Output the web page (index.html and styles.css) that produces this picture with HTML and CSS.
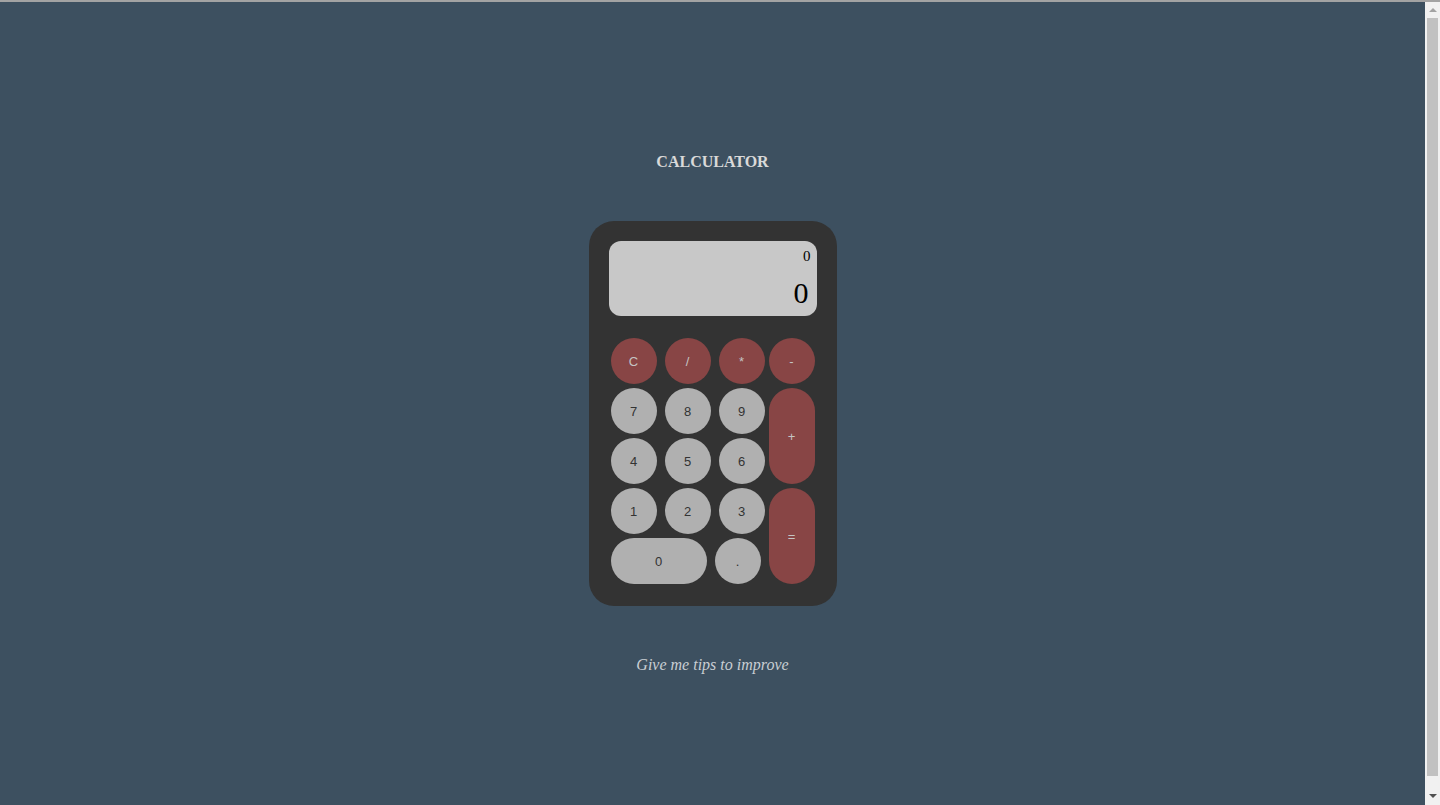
FILE: index.html
```html
<!DOCTYPE html>
<html lang="en">
<head>
<meta charset="utf-8">
<title>Calculator</title>
<link rel="stylesheet" href="styles.css">
</head>
<body>
<div class="topline"></div>
<div class="scrollbar" aria-hidden="true">
  <div class="arrow up"></div>
  <div class="thumb"></div>
  <div class="arrow down"></div>
</div>
<main class="page">
  <h1 class="title">CALCULATOR</h1>
  <div class="calc">
    <div class="display">
      <div class="prev">0</div>
      <div class="cur">0</div>
    </div>
    <div class="keypad">
      <div class="left">
        <div class="row">
          <button class="key op">C</button>
          <button class="key op">/</button>
          <button class="key op">*</button>
        </div>
        <div class="row">
          <button class="key num">7</button>
          <button class="key num">8</button>
          <button class="key num">9</button>
        </div>
        <div class="row">
          <button class="key num">4</button>
          <button class="key num">5</button>
          <button class="key num">6</button>
        </div>
        <div class="row">
          <button class="key num">1</button>
          <button class="key num">2</button>
          <button class="key num">3</button>
        </div>
        <div class="row">
          <button class="key num zero">0</button>
          <button class="key num">.</button>
        </div>
      </div>
      <div class="right">
        <button class="key op">-</button>
        <button class="key op tall">+</button>
        <button class="key op tall">=</button>
      </div>
    </div>
  </div>
  <p class="tips">Give me tips to improve</p>
</main>
</body>
</html>
```
FILE: styles.css
```css
html, body {
  margin: 0;
  padding: 0;
}
html {
  overflow: hidden;
}
body {
  background: #3d5060;
  font-family: "Liberation Serif", "Times New Roman", serif;
}
.topline {
  position: fixed;
  top: 0;
  left: 0;
  right: 0;
  height: 2px;
  background: #a3a3a3;
  z-index: 10;
}
.scrollbar {
  position: fixed;
  top: 0;
  right: 0;
  bottom: 0;
  width: 15px;
  background: #f1f1f1;
  display: flex;
  flex-direction: column;
  align-items: center;
  z-index: 5;
}
.arrow {
  width: 0;
  height: 0;
  border-left: 4px solid transparent;
  border-right: 4px solid transparent;
}
.arrow.up {
  margin-top: 8px;
  border-bottom: 4px solid #a3a3a3;
}
.arrow.down {
  margin-bottom: 7px;
  border-top: 4px solid #505050;
}
.thumb {
  width: 11px;
  flex: 1;
  margin: 6px 0 18px;
  background: #c1c1c1;
}
.page {
  display: flex;
  flex-direction: column;
  align-items: center;
  padding: 153px 15px 146px 0;
}
.title {
  margin: 0;
  font-size: 16px;
  line-height: 18px;
  font-weight: bold;
  color: #d9d9d9;
}
.calc {
  margin-top: 50px;
  width: 248px;
  height: 385px;
  box-sizing: border-box;
  background: #333333;
  border-radius: 25px;
  padding: 20px;
  display: flex;
  flex-direction: column;
  align-items: center;
}
.display {
  width: 208px;
  height: 75px;
  box-sizing: border-box;
  background: #c8c8c8;
  border-radius: 12px;
  padding: 7px 8px 6px;
  text-align: right;
  color: #000;
}
.prev {
  font-size: 15px;
  line-height: 17px;
  margin-right: -2px;
}
.cur {
  margin-top: 11px;
  font-size: 30px;
  line-height: 34px;
}
.keypad {
  margin-top: 22px;
  display: flex;
  gap: 4px;
}
.left, .right {
  display: flex;
  flex-direction: column;
  gap: 4px;
}
.row {
  display: flex;
  gap: 8px;
}
.key {
  width: 46px;
  height: 46px;
  border: none;
  border-radius: 23px;
  padding: 0;
  margin: 0;
  font-family: "Liberation Sans", Arial, sans-serif;
  font-size: 13px;
  cursor: pointer;
}
.num {
  background: #b0b0b0;
  color: #333333;
}
.op {
  background: #884545;
  color: #c4c4c4;
}
.zero {
  width: 96px;
}
.tall {
  height: 96px;
}
.tips {
  margin: 50px 0 0;
  font-size: 16px;
  line-height: 18px;
  font-style: italic;
  color: #c9ced3;
}
```
